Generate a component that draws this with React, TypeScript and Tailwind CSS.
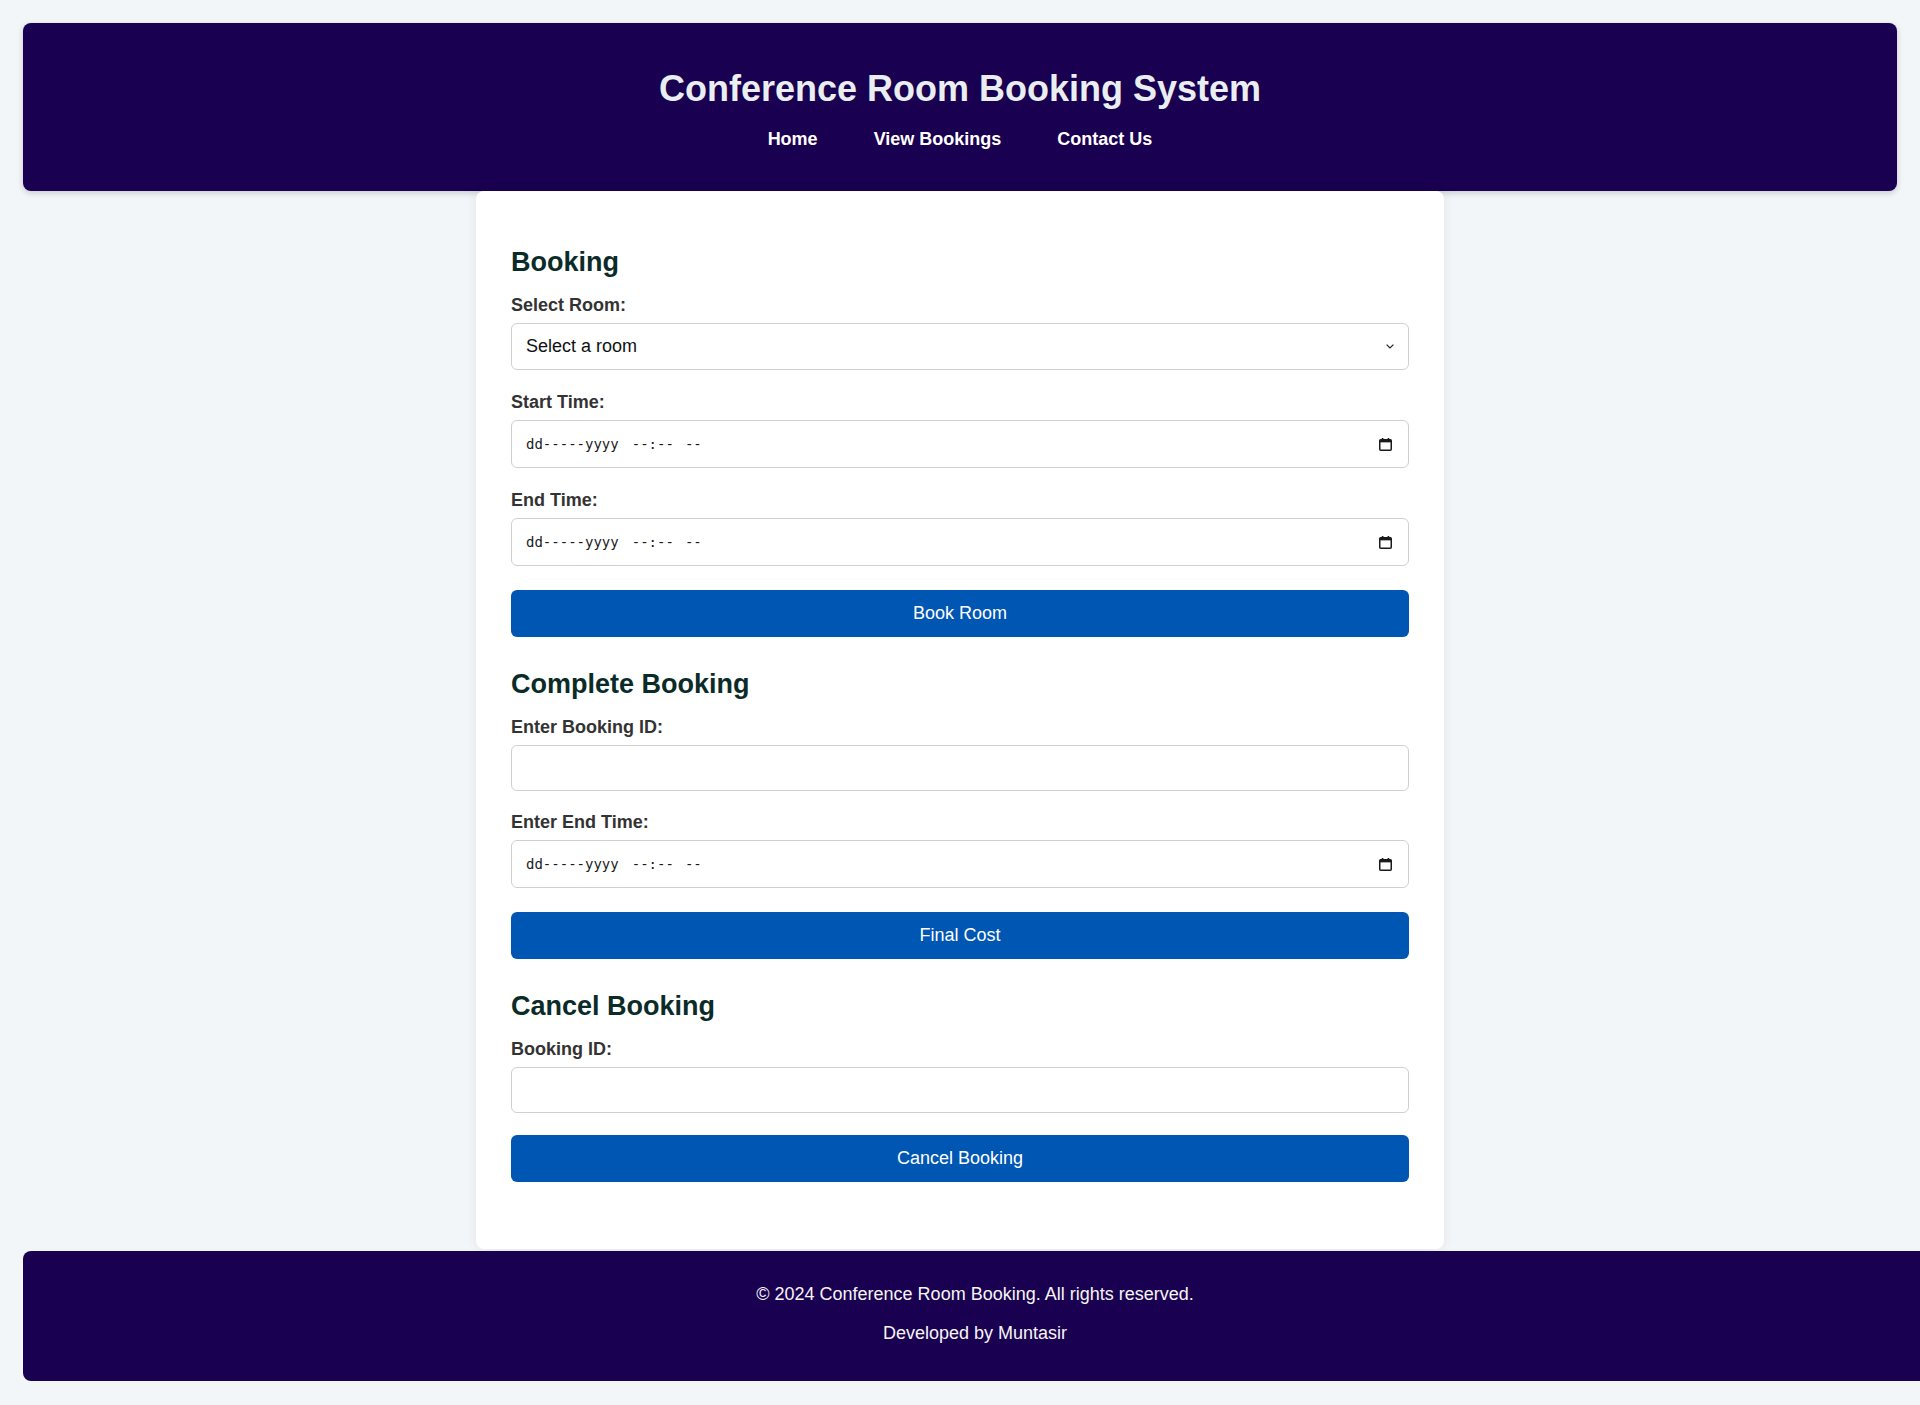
import React from "react";

function CalendarIcon() {
  return (
    <svg width="13" height="13" viewBox="0 0 13 13" className="shrink-0">
      <rect x="0.75" y="1.75" width="11.5" height="10.5" rx="1" fill="none" stroke="#1a1a1a" strokeWidth="1.5" />
      <rect x="0.75" y="1.75" width="11.5" height="2.6" fill="#1a1a1a" />
      <rect x="2.8" y="0" width="1.6" height="2" fill="#1a1a1a" />
      <rect x="8.6" y="0" width="1.6" height="2" fill="#1a1a1a" />
    </svg>
  );
}

function Chevron() {
  return (
    <svg width="8" height="5" viewBox="0 0 8 5" className="shrink-0">
      <path d="M0.6 0.6l3.4 3.4L7.4 0.6" fill="none" stroke="#222" strokeWidth="1.2" />
    </svg>
  );
}

function Label({ children }: { children: React.ReactNode }) {
  return (
    <label className="block text-[18px] leading-[20px] font-bold text-[#333] mb-[8px]">
      {children}
    </label>
  );
}

function DateField() {
  return (
    <div className="flex items-center justify-between h-[48px] w-full border border-[#d0d0d0] rounded-[6px] bg-white pl-[14px] pr-[16px]">
      <div className="flex font-['DejaVu_Sans_Mono',monospace] text-[14px] text-[#1a1a1a] whitespace-pre">
        <span>dd-----yyyy</span>
        <span className="ml-[13px]">--:--</span>
        <span className="ml-[11px]">--</span>
      </div>
      <CalendarIcon />
    </div>
  );
}

function TextField() {
  return (
    <input
      type="text"
      className="block h-[46px] w-full border border-[#d0d0d0] rounded-[6px] bg-white px-[14px] text-[18px] outline-none"
    />
  );
}

function Button({ children, last }: { children: React.ReactNode; last?: boolean }) {
  return (
    <button
      className={`block w-full h-[47px] rounded-[6px] bg-[#0056b3] text-white text-[18px] ${
        last ? "mt-[22px]" : "mt-[24px]"
      }`}
    >
      {children}
    </button>
  );
}

function SectionTitle({ children, first }: { children: React.ReactNode; first?: boolean }) {
  return (
    <h2
      className={`text-[27px] leading-[31px] font-bold text-[#0b2b28] mb-[17px] ${
        first ? "" : "mt-[32px]"
      }`}
    >
      {children}
    </h2>
  );
}

export default function App() {
  return (
    <div className="min-h-screen w-full overflow-x-hidden bg-[#f3f6f9] font-['Liberation_Sans',Arial,sans-serif]">
      {/* Header */}
      <header className="mx-[23px] mt-[23px] pt-[45px] pb-[42px] rounded-[8px] bg-[#1a0050] shadow-[0_2px_6px_rgba(0,0,0,0.18)] text-center">
        <h1 className="text-[36px] leading-[41px] font-bold text-[#e9eef0]">
          Conference Room Booking System
        </h1>
        <nav className="mt-[20px] flex justify-center gap-[56px]">
          <a className="text-[18px] leading-[20px] font-bold text-white">Home</a>
          <a className="text-[18px] leading-[20px] font-bold text-white">View Bookings</a>
          <a className="text-[18px] leading-[20px] font-bold text-white">Contact Us</a>
        </nav>
      </header>

      {/* Card */}
      <main className="w-[968px] mx-auto bg-white rounded-[8px] shadow-[0_0_12px_rgba(0,0,0,0.08)] pt-[56px] pb-[67px] px-[35px]">
        <SectionTitle first>Booking</SectionTitle>
        <Label>Select Room:</Label>
        <div className="flex items-center justify-between h-[47px] w-full border border-[#d0d0d0] rounded-[6px] bg-white pl-[14px] pr-[14px]">
          <span className="text-[18px] text-[#111]">Select a room</span>
          <Chevron />
        </div>
        <div className="mt-[22px]">
          <Label>Start Time:</Label>
          <DateField />
        </div>
        <div className="mt-[22px]">
          <Label>End Time:</Label>
          <DateField />
        </div>
        <Button>Book Room</Button>

        <SectionTitle>Complete Booking</SectionTitle>
        <Label>Enter Booking ID:</Label>
        <TextField />
        <div className="mt-[21px]">
          <Label>Enter End Time:</Label>
          <DateField />
        </div>
        <Button>Final Cost</Button>

        <SectionTitle>Cancel Booking</SectionTitle>
        <Label>Booking ID:</Label>
        <TextField />
        <Button last>Cancel Booking</Button>
      </main>

      {/* Footer */}
      <footer className="ml-[23px] mb-[23px] mt-[2px] w-[1904px] rounded-[8px] bg-[#1a0050] pt-[33px] pb-[38px] text-center text-[18px] leading-[20px] text-[#f5f5f5]">
        <p>© 2024 Conference Room Booking. All rights reserved.</p>
        <p className="mt-[19px]">Developed by Muntasir</p>
      </footer>
    </div>
  );
}
